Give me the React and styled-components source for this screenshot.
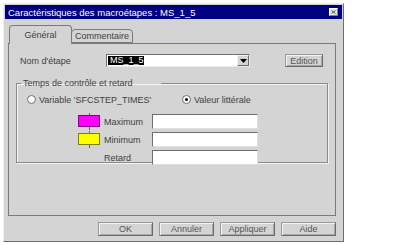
import React from "react";
import styled, { createGlobalStyle } from "styled-components";

const Global = createGlobalStyle`
  body {
    margin: 0;
    background: #ffffff;
    font-family: "Liberation Sans Narrow", "Arial Narrow", "Liberation Sans", Arial, sans-serif;
    font-size: 9px;
    color: #404040;
  }
`;

const Window = styled.div`
  margin: 3px 0 0 3px;
  width: 341px;
  height: 239px;
  box-sizing: border-box;
  background: #d4d4d4;
  border: 1px solid;
  border-color: #ececec #6e6e6e #6e6e6e #ececec;
  padding: 1px;
  display: flex;
  flex-direction: column;
`;

const TitleBar = styled.div`
  height: 14px;
  background: #000080;
  color: #ffffff;
  display: flex;
  align-items: center;
  justify-content: space-between;
  padding: 0 4px 0 3px;
  font-size: 9.5px;
`;

const CloseBox = styled.div`
  width: 9px;
  height: 8px;
  box-sizing: border-box;
  background: #e6e6e6;
  border: 1px solid;
  border-color: #ffffff #808080 #808080 #ffffff;
  display: flex;
  align-items: center;
  justify-content: center;
`;

const Body = styled.div`
  padding: 6px 6px 0 3px;
  display: flex;
  flex-direction: column;
`;

const TabRow = styled.div`
  display: flex;
  align-items: flex-end;
  padding-left: 1px;
  height: 18px;
  position: relative;
  z-index: 1;
`;

const Tab = styled.div`
  width: ${({ $w }) => $w}px;
  height: ${({ $active }) => ($active ? 19 : 14)}px;
  margin-bottom: ${({ $active }) => ($active ? -1 : 0)}px;
  margin-left: ${({ $active }) => ($active ? 0 : -1)}px;
  box-sizing: border-box;
  background: #d4d4d4;
  border: 1px solid #7a7a7a;
  border-bottom: ${({ $active }) => ($active ? "none" : "1px solid #7a7a7a")};
  border-radius: 4px 4px 0 0;
  display: flex;
  align-items: center;
  justify-content: center;
  padding-bottom: ${({ $active }) => ($active ? 1 : 0)}px;
`;

const Panel = styled.div`
  height: 173px;
  box-sizing: border-box;
  border: 1px solid #7a7a7a;
  padding: 10px 7px 0 7px;
  display: flex;
  flex-direction: column;
`;

const NameRow = styled.div`
  display: flex;
  align-items: center;
  height: 13px;
`;

const NameLabel = styled.span`
  width: 86px;
  padding-left: 4px;
`;

const Combo = styled.div`
  width: 144px;
  height: 13px;
  box-sizing: border-box;
  background: #ffffff;
  border: 1px solid;
  border-color: #6e6e6e #e8e8e8 #e8e8e8 #6e6e6e;
  display: flex;
  align-items: center;
  justify-content: space-between;
  padding-left: 1px;
`;

const Selected = styled.span`
  background: #000000;
  color: #ffffff;
  width: 36px;
  height: 9px;
  line-height: 9px;
  padding-left: 2px;
  box-sizing: border-box;
`;

const DropButton = styled.div`
  width: 12px;
  height: 11px;
  box-sizing: border-box;
  background: #d4d4d4;
  border: 1px solid;
  border-color: #f4f4f4 #6e6e6e #6e6e6e #f4f4f4;
  display: flex;
  align-items: center;
  justify-content: center;
`;

const Button = styled.div`
  width: ${({ $w }) => $w}px;
  height: ${({ $h }) => $h}px;
  box-sizing: border-box;
  border: 1px solid;
  border-color: #9a9a9a #6a6a6a #6a6a6a #9a9a9a;
  box-shadow: inset 1px 1px 0 #f2f2f2, inset -1px -1px 0 #a8a8a8;
  display: flex;
  align-items: center;
  justify-content: center;
  color: #555555;
  margin-left: ${({ $ml }) => $ml || 0}px;
`;

const Group = styled.fieldset`
  margin: 11px 0 0 0;
  padding: 0 0 2px 0;
  border: 1px solid #8a8a8a;
  box-shadow: 1px 1px 0 #f4f4f4, inset 1px 1px 0 #f4f4f4;
  min-width: 0;
  height: 85px;
  box-sizing: border-box;
`;

const Legend = styled.legend`
  margin-left: 4px;
  padding: 0 28px 0 2px;
  line-height: 10px;
`;

const RadioRow = styled.div`
  display: flex;
  align-items: center;
  padding-left: 10px;
  margin-top: 6px;
  height: 11px;
`;

const RadioOption = styled.div`
  display: flex;
  align-items: center;
  gap: 3px;
  width: ${({ $w }) => ($w ? `${$w}px` : "auto")};
`;

const RadioCircle = styled.div`
  width: 9px;
  height: 9px;
  box-sizing: border-box;
  border-radius: 50%;
  background: #ffffff;
  border: 1px solid #6e6e6e;
  display: flex;
  align-items: center;
  justify-content: center;
`;

const Dot = styled.div`
  width: 3px;
  height: 3px;
  border-radius: 50%;
  background: #000000;
`;

const Fields = styled.div`
  display: flex;
  flex-direction: column;
  gap: 3px;
  margin: 9px 0 0 61px;
`;

const FieldRow = styled.div`
  display: flex;
  align-items: center;
  height: 15px;
`;

const Marker = styled.div`
  width: 22px;
  height: 19px;
  display: flex;
  margin-right: 4px;
`;

const FieldLabel = styled.span`
  width: 48px;
  margin-left: ${({ $indent }) => ($indent ? 26 : 0)}px;
`;

const Input = styled.div`
  width: 106px;
  height: 15px;
  box-sizing: border-box;
  background: #ffffff;
  border: 1px solid;
  border-color: #6e6e6e #e0e0e0 #e0e0e0 #6e6e6e;
`;

const Footer = styled.div`
  display: flex;
  justify-content: flex-end;
  gap: 6px;
  margin-top: 6px;
`;

const StepMarker = ({ fill, stroke }) => (
  <Marker>
    <svg width="22" height="19" viewBox="0 0 22 19">
      <line x1="11.5" y1="1" x2="11.5" y2="4" stroke="#666" />
      <line x1="11.5" y1="15" x2="11.5" y2="18" stroke="#666" />
      <rect x="0.5" y="3.5" width="21" height="11" fill={fill} stroke={stroke} />
    </svg>
  </Marker>
);

export default function App() {
  return (
    <>
      <Global />
      <Window>
        <TitleBar>
          <span>Caractéristiques des macroétapes : MS_1_5</span>
          <CloseBox>
            <svg width="5" height="4" viewBox="0 0 5 4">
              <path d="M0.5 0.5 L4.5 3.5 M4.5 0.5 L0.5 3.5" stroke="#444" strokeWidth="0.9" />
            </svg>
          </CloseBox>
        </TitleBar>
        <Body>
          <TabRow>
            <Tab $w={63} $active>Général</Tab>
            <Tab $w={62}>Commentaire</Tab>
          </TabRow>
          <Panel>
            <NameRow>
              <NameLabel>Nom d'étape</NameLabel>
              <Combo>
                <Selected>MS_1_5</Selected>
                <DropButton>
                  <svg width="7" height="4" viewBox="0 0 7 4">
                    <path d="M0 0 H7 L3.5 4 Z" fill="#000" />
                  </svg>
                </DropButton>
              </Combo>
              <Button $w={38} $h={13} $ml={35}>Edition</Button>
            </NameRow>
            <Group>
              <Legend>Temps de contrôle et retard</Legend>
              <RadioRow>
                <RadioOption $w={155}>
                  <RadioCircle />
                  <span>Variable 'SFCSTEP_TIMES'</span>
                </RadioOption>
                <RadioOption>
                  <RadioCircle>
                    <Dot />
                  </RadioCircle>
                  <span>Valeur littérale</span>
                </RadioOption>
              </RadioRow>
              <Fields>
                <FieldRow>
                  <StepMarker fill="#ff00ff" stroke="#800080" />
                  <FieldLabel>Maximum</FieldLabel>
                  <Input />
                </FieldRow>
                <FieldRow>
                  <StepMarker fill="#ffff00" stroke="#808000" />
                  <FieldLabel>Minimum</FieldLabel>
                  <Input />
                </FieldRow>
                <FieldRow>
                  <FieldLabel $indent>Retard</FieldLabel>
                  <Input />
                </FieldRow>
              </Fields>
            </Group>
          </Panel>
          <Footer>
            <Button $w={55} $h={14}>OK</Button>
            <Button $w={55} $h={14}>Annuler</Button>
            <Button $w={55} $h={14}>Appliquer</Button>
            <Button $w={55} $h={14}>Aide</Button>
          </Footer>
        </Body>
      </Window>
    </>
  );
}
